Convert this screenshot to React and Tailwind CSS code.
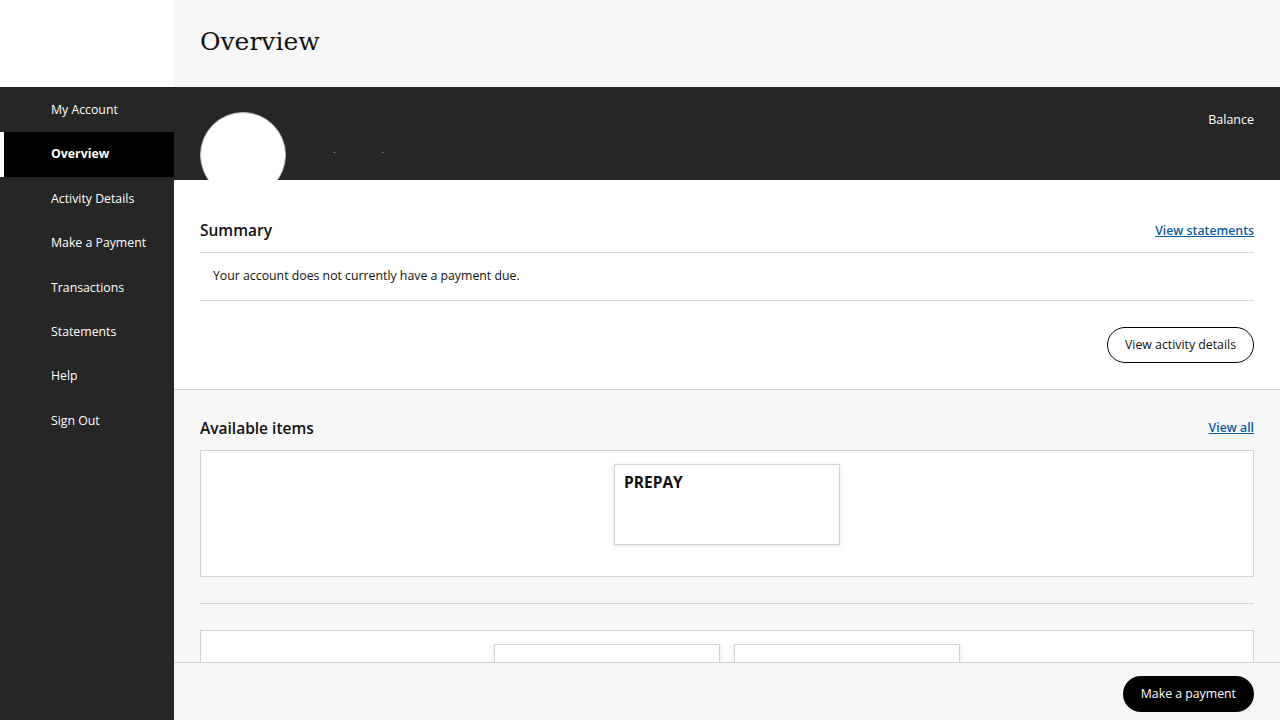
import React from "react";

const navItems = [
  "My Account",
  "Overview",
  "Activity Details",
  "Make a Payment",
  "Transactions",
  "Statements",
  "Help",
  "Sign Out",
];

function Sidebar() {
  return (
    <aside className="w-[174px] shrink-0 flex flex-col h-full">
      <div className="h-[87px] bg-white" />
      <nav className="flex-1 bg-[#262626] pt-[1px]">
        {navItems.map((item) => {
          const active = item === "Overview";
          return (
            <div
              key={item}
              className={
                active
                  ? "h-[44.4px] flex items-center pl-[47px] bg-black border-l-4 border-white text-white text-[12.3px] font-bold"
                  : "h-[44.4px] flex items-center pl-[51px] text-white text-[12.3px]"
              }
            >
              {item}
            </div>
          );
        })}
      </nav>
    </aside>
  );
}

function ItemCard({ title }) {
  return (
    <div className="w-[226px] h-[81px] bg-white border border-[#d4d4d4] shadow-[0_1px_4px_rgba(0,0,0,0.12)] px-[9px] py-[6px]">
      {title && <div className="text-[15.5px] font-bold text-[#111] leading-[22px]">{title}</div>}
    </div>
  );
}

export default function App() {
  return (
    <div
      className="h-[720px] w-[1280px] flex overflow-hidden bg-[#f7f7f7] text-black"
      style={{ fontFamily: '"Open Sans", "Noto Sans", sans-serif' }}
    >
      <Sidebar />
      <main className="flex-1 relative flex flex-col overflow-hidden">
        {/* Page header */}
        <header className="h-[87px] shrink-0 flex items-center px-[26px] bg-[#f7f7f7]">
          <h1
            className="text-[25px] text-[#111] -mt-[3px]"
            style={{ fontFamily: '"DejaVu Serif", "Liberation Serif", serif' }}
          >
            Overview
          </h1>
        </header>

        {/* Account band */}
        <div className="h-[93px] shrink-0 bg-[#262626] relative overflow-hidden flex px-[26px]">
          <div className="mt-[25px] w-[86px] h-[86px] rounded-full bg-white border border-[#bbb] shrink-0" />
          <div className="flex gap-[46px] mt-[60px] ml-[47px] text-[#aaa] text-[8px] leading-none h-fit">
            <span>-</span>
            <span>-</span>
          </div>
          <div className="ml-auto mt-[24px] text-white text-[12.5px] h-fit">Balance</div>
        </div>

        {/* Summary */}
        <section className="bg-white px-[26px] border-b border-[#d6d6d6] shrink-0">
          <div className="flex items-center justify-between pt-[38px] pb-[10px] border-b border-[#d6d6d6]">
            <h2 className="text-[15.5px] font-semibold leading-6 text-[#111]">Summary</h2>
            <a href="#" className="text-[12.3px] font-semibold text-[#0e5c9c] underline mt-[2px]">
              View statements
            </a>
          </div>
          <div className="h-[48px] flex items-center pl-[13px] text-[12.3px] text-[#111] border-b border-[#d6d6d6]">
            Your account does not currently have a payment due.
          </div>
          <div className="flex justify-end pt-[26px] pb-[26px]">
            <button className="h-[36px] px-[17px] rounded-full border border-black text-[12.3px] text-[#111] bg-white">
              View activity details
            </button>
          </div>
        </section>

        {/* Available items */}
        <section className="px-[26px] pt-[26px]">
          <div className="flex items-center justify-between mb-[10px]">
            <h2 className="text-[15.5px] font-semibold leading-6 text-[#111]">Available items</h2>
            <a href="#" className="text-[12.3px] font-semibold text-[#0e5c9c] underline">
              View all
            </a>
          </div>
          <div className="bg-white border border-[#d4d4d4] flex justify-center gap-[14px] pt-[13px] pb-[31px]">
            <ItemCard title="PREPAY" />
          </div>
          <div className="border-t border-[#d6d6d6] mt-[26px]" />
          <div className="mt-[26px] bg-white border border-[#d4d4d4] flex justify-center gap-[14px] pt-[13px] pb-[31px]">
            <ItemCard />
            <ItemCard />
          </div>
        </section>

        {/* Footer action bar */}
        <div className="absolute left-0 right-0 bottom-0 h-[58px] bg-[#f7f7f7] border-t border-[#d6d6d6] flex items-start justify-end px-[26px] pt-[13px]">
          <button className="h-[36px] px-[18px] rounded-full bg-black text-white text-[12.3px]">
            Make a payment
          </button>
        </div>
      </main>
    </div>
  );
}
